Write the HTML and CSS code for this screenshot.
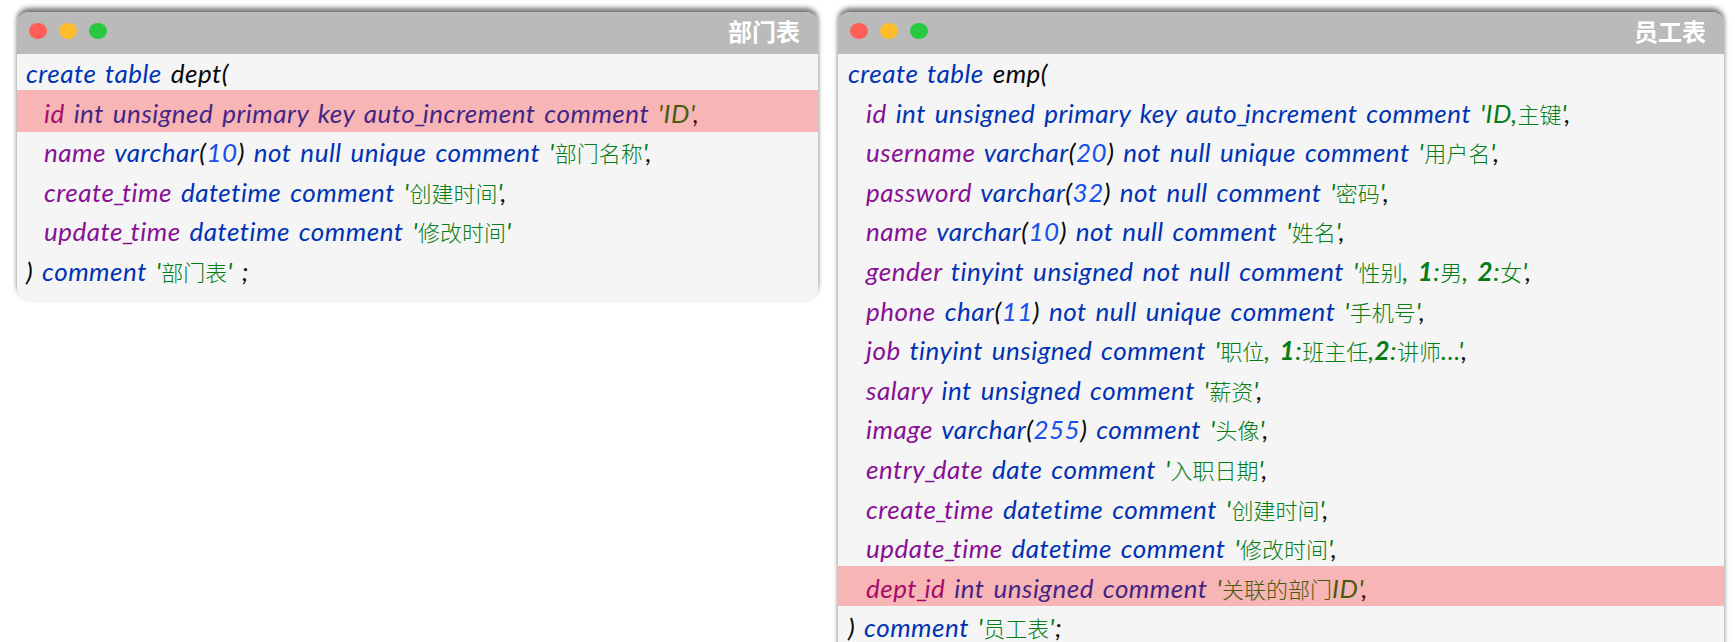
FILE: index.html
```html
<!DOCTYPE html>
<html lang="zh">
<head>
<meta charset="utf-8">
<title>表结构</title>
<link rel="stylesheet" href="styles.css">
</head>
<body>
<main class="page">
  <section class="win win-dept">
    <header class="bar"><span class="dots"><i class="dot red"></i><i class="dot yellow"></i><i class="dot green"></i></span><h2 class="title">部门表</h2></header>
    <div class="code">
      <div class="line"><b class="k">create table</b> dept(</div>
      <div class="line in mark-a"><b class="c">id</b> <b class="k">int unsigned primary key auto<span class="u">_</span>increment comment</b> <b class="s">'ID'</b>,</div>
      <div class="line in"><b class="c">name</b> <b class="k">varchar</b>(<b class="n">10</b>) <b class="k">not null unique comment</b> <b class="s">'<span class="z">部门名称</span>'</b>,</div>
      <div class="line in"><b class="c">create<span class="u">_</span>time</b> <b class="k">datetime comment</b> <b class="s">'<span class="z">创建时间</span>'</b>,</div>
      <div class="line in"><b class="c">update<span class="u">_</span>time</b> <b class="k">datetime comment</b> <b class="s">'<span class="z">修改时间</span>'</b></div>
      <div class="line">) <b class="k">comment</b> <b class="s">'<span class="z">部门表</span>'</b> ;</div>
    </div>
  </section>
  <section class="win win-emp">
    <header class="bar"><span class="dots"><i class="dot red"></i><i class="dot yellow"></i><i class="dot green"></i></span><h2 class="title">员工表</h2></header>
    <div class="code">
      <div class="line"><b class="k">create table</b> emp(</div>
      <div class="line in"><b class="c">id</b> <b class="k">int unsigned primary key auto<span class="u">_</span>increment comment</b> <b class="s">'ID,<span class="z">主键</span>'</b>,</div>
      <div class="line in"><b class="c">username</b> <b class="k">varchar</b>(<b class="n">20</b>) <b class="k">not null unique comment</b> <b class="s">'<span class="z">用户名</span>'</b>,</div>
      <div class="line in"><b class="c">password</b> <b class="k">varchar</b>(<b class="n">32</b>) <b class="k">not null comment</b> <b class="s">'<span class="z">密码</span>'</b>,</div>
      <div class="line in"><b class="c">name</b> <b class="k">varchar</b>(<b class="n">10</b>) <b class="k">not null comment</b> <b class="s">'<span class="z">姓名</span>'</b>,</div>
      <div class="line in"><b class="c">gender</b> <b class="k">tinyint unsigned not null comment</b> <b class="s">'<span class="z">性别</span>, <em>1</em>:<span class="z">男</span>, <em>2</em>:<span class="z">女</span>'</b>,</div>
      <div class="line in"><b class="c">phone</b> <b class="k">char</b>(<b class="n">11</b>) <b class="k">not null unique comment</b> <b class="s">'<span class="z">手机号</span>'</b>,</div>
      <div class="line in"><b class="c">job</b> <b class="k">tinyint unsigned comment</b> <b class="s">'<span class="z">职位</span>, <em>1</em>:<span class="z">班主任</span>,<em>2</em>:<span class="z">讲师</span>...'</b>,</div>
      <div class="line in"><b class="c">salary</b> <b class="k">int unsigned comment</b> <b class="s">'<span class="z">薪资</span>'</b>,</div>
      <div class="line in"><b class="c">image</b> <b class="k">varchar</b>(<b class="n">255</b>) <b class="k">comment</b> <b class="s">'<span class="z">头像</span>'</b>,</div>
      <div class="line in"><b class="c">entry<span class="u">_</span>date</b> <b class="k">date comment</b> <b class="s">'<span class="z">入职日期</span>'</b>,</div>
      <div class="line in"><b class="c">create<span class="u">_</span>time</b> <b class="k">datetime comment</b> <b class="s">'<span class="z">创建时间</span>'</b>,</div>
      <div class="line in"><b class="c">update<span class="u">_</span>time</b> <b class="k">datetime comment</b> <b class="s">'<span class="z">修改时间</span>'</b>,</div>
      <div class="line in mark-b"><b class="c">dept<span class="u">_</span>id</b> <b class="k">int unsigned comment</b> <b class="s">'<span class="z">关联的部门</span>ID'</b>,</div>
      <div class="line">) <b class="k">comment</b> <b class="s">'<span class="z">员工表</span>'</b>;</div>
    </div>
  </section>
</main>
</body>
</html>
```
FILE: styles.css
```css
html, body { margin: 0; height: 100%; background: #fff; overflow: hidden; }
.page { display: flex; align-items: flex-start; gap: 20px; padding: 12px 11px 0 17px; }
.win { background: #f5f5f5; border-radius: 12px 12px 14px 14px; box-shadow: 0 -4px 5px rgba(0,0,0,.55); }
.win-dept { width: 801px; height: 290px; }
.win-emp { width: 886px; height: 660px; }
.bar { height: 42px; background: #bababa; border-radius: 12px 12px 0 0; display: flex; align-items: center; justify-content: space-between; padding: 0 18px 4px 12px; box-sizing: border-box; }
.dots { display: flex; gap: 12px; }
.dot { width: 18px; height: 16px; border-radius: 50%; display: block; }
.red { background: #ff5f57; }
.yellow { background: #ffbd2e; }
.green { background: #28c840; }
.title { margin: 0; font: 700 24px/1 "Noto Sans CJK SC", sans-serif; color: #fff; }
.code { padding-left: 9px; font: italic 400 26px/39.6px Lato, "Noto Sans CJK SC", sans-serif; letter-spacing: .5px; word-spacing: 2.3px; color: #080808; }
.win-emp .code { padding-left: 10px; }
.code b { font-weight: 400; }
.line { position: relative; white-space: pre; }
.in { padding-left: 18px; }
.k { color: #0033b3; }
.c { color: #871094; }
.n { color: #1750eb; }
.s { color: #067d17; }
.s em { font-weight: 700; }
.u { letter-spacing: -4px; }
.z { font: normal 300 22px/1 "Noto Sans CJK SC", sans-serif; letter-spacing: 0; }
.mark-a::after, .mark-b::after { content: ""; position: absolute; left: -9px; right: 0; background: rgba(255,0,0,.26); }
.mark-a::after { top: -4px; height: 42px; }
.mark-b::after { left: -10px; top: -3px; height: 40px; }
```
